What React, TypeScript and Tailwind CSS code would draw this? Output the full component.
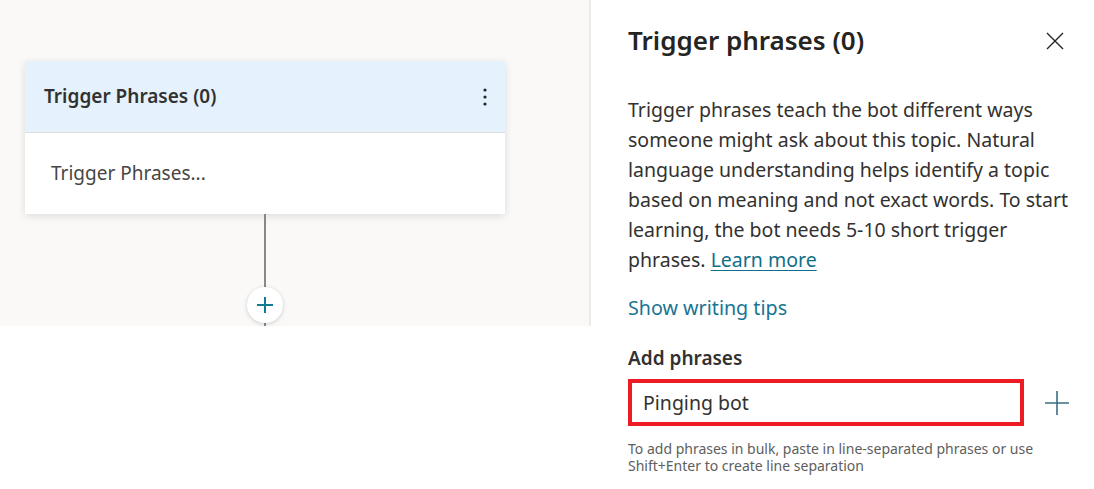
import React from "react";

const font = { fontFamily: '"Noto Sans", "Open Sans", sans-serif' };

function Dots() {
  return (
    <svg width="6" height="18" viewBox="0 0 6 18" aria-hidden>
      <circle cx="3" cy="2" r="1.6" fill="#252423" />
      <circle cx="3" cy="9" r="1.6" fill="#252423" />
      <circle cx="3" cy="16" r="1.6" fill="#252423" />
    </svg>
  );
}

export default function App() {
  return (
    <div className="w-[1094px] h-[489px] bg-white flex overflow-hidden" style={font}>
      {/* Canvas */}
      <div className="w-[591px] shrink-0 flex flex-col">
        <div className="h-[326px] bg-[#faf9f8] border-r-2 border-[#edebe9] pt-[61px] pl-[25px] flex flex-col">
          <div className="w-[480px] bg-white shadow-[0_2px_8px_rgba(0,0,0,0.12)] flex flex-col">
            <div className="h-[72px] bg-[#e5f1fc] border-b border-[#e1dfdd] flex items-center justify-between pl-[19px] pr-[17px]">
              <span className="text-[19px] font-semibold text-[#323130]">Trigger Phrases (0)</span>
              <Dots />
            </div>
            <div className="h-[81px] flex items-center pl-[26px]">
              <span className="text-[19px] text-[#484644]">Trigger Phrases...</span>
            </div>
          </div>
          <div className="w-[480px] flex flex-col items-center flex-1">
            <div className="w-[2px] h-[73px] bg-[#8a8886]" />
            <div className="relative w-[36px] h-[36px] rounded-full bg-white shadow-[0_1px_4px_rgba(0,0,0,0.18)] flex items-center justify-center">
              <svg width="18" height="18" viewBox="0 0 18 18">
                <path d="M9 1v16M1 9h16" stroke="#117b93" strokeWidth="2" />
              </svg>
            </div>
            <div className="w-[2px] flex-1 bg-[#8a8886]" />
          </div>
        </div>
      </div>

      {/* Panel */}
      <div className="flex-1 pl-[37px] pr-[22px] flex flex-col">
        <div className="flex items-center justify-between h-[82px] pb-[1px]">
          <h1 className="text-[26px] font-semibold text-[#252423]">Trigger phrases (0)</h1>
          <svg width="18" height="18" viewBox="0 0 18 18" className="mr-[8px]">
            <path d="M1 1l16 16M17 1L1 17" stroke="#252423" strokeWidth="1.4" />
          </svg>
        </div>
        <p className="mt-[13px] text-[19.5px] leading-[30px] text-[#323130]">
          Trigger phrases teach the bot different ways
          <br />
          someone might ask about this topic. Natural
          <br />
          language understanding helps identify a topic
          <br />
          based on meaning and not exact words. To start
          <br />
          learning, the bot needs 5-10 short trigger
          <br />
          phrases.{" "}
          <a className="text-[#0f6f8a] underline underline-offset-[3px]">Learn more</a>
        </p>
        <div className="mt-[18px] text-[19.7px] leading-[30px] text-[#1a7494]">Show writing tips</div>
        <div className="mt-[20px] text-[19px] font-semibold leading-[30px] text-[#323130]">Add phrases</div>
        <div className="mt-[6px] flex items-center">
          <div className="w-[396px] h-[47px] border-4 border-[#ed1c24] flex items-center pl-[11px] text-[19.5px] text-[#323130]">
            Pinging bot
          </div>
          <svg width="24" height="24" viewBox="0 0 24 24" className="ml-[21px]">
            <path d="M12 0v24M0 12h24" stroke="#3a6f84" strokeWidth="1.6" />
          </svg>
        </div>
        <div className="mt-[14px] text-[14px] leading-[17px] text-[#605e5c]">
          To add phrases in bulk, paste in line-separated phrases or use
          <br />
          Shift+Enter to create line separation
        </div>
      </div>
    </div>
  );
}
